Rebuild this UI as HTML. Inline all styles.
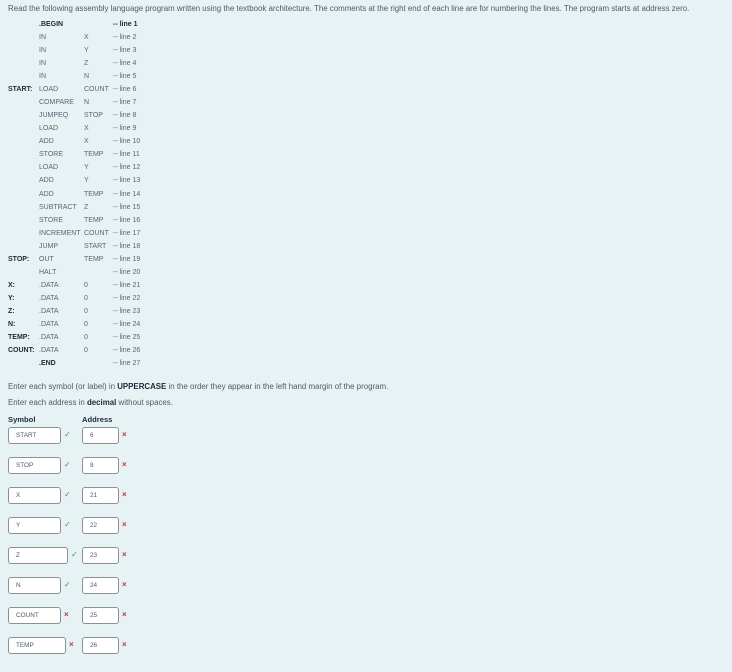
<!DOCTYPE html>
<html><head><style>
body{margin:0;width:732px;height:672px;background:#e6f2f4;font-family:"Liberation Sans",sans-serif;font-size:7px;color:#5a6672;position:relative;overflow:hidden}
.a{position:absolute;white-space:nowrap;line-height:9px}
.t{font-size:7.9px;color:#4f5b66}
.b{font-weight:bold;color:#1d2a36}
.in{position:absolute;height:17px;border:1px solid #8a9096;border-radius:3px;background:#fff;box-sizing:border-box;font-size:6.4px;padding-left:7px;display:flex;align-items:center;color:#556}
.ck{position:absolute;color:#3a9a5a;font-size:8px}
.x{position:absolute;color:#d03030;font-size:8px;font-weight:bold}
</style></head><body>
<div class="a t" style="left:8px;top:4px">Read the following assembly language program written using the textbook architecture. The comments at the right end of each line are for numbering the lines. The program starts at address zero.</div>
<div id="p"></div>
<div class="a t" style="left:8px;top:382px">Enter each symbol (or label) in <b style="color:#1d2a36">UPPERCASE</b> in the order they appear in the left hand margin of the program.</div>
<div class="a t" style="left:8px;top:398px">Enter each address in <b style="color:#1d2a36">decimal</b> without spaces.</div>
<div class="a b" style="left:8px;top:415px;font-size:7.6px">Symbol</div>
<div class="a b" style="left:82px;top:415px;font-size:7.6px">Address</div>
<div id="f"></div>
<script>
var L=[["",".BEGIN","",1],["","IN","X"],["","IN","Y"],["","IN","Z"],["","IN","N"],["START:","LOAD","COUNT"],["","COMPARE","N"],["","JUMPEQ","STOP"],["","LOAD","X"],["","ADD","X"],["","STORE","TEMP"],["","LOAD","Y"],["","ADD","Y"],["","ADD","TEMP"],["","SUBTRACT","Z"],["","STORE","TEMP"],["","INCREMENT","COUNT"],["","JUMP","START"],["STOP:","OUT","TEMP"],["","HALT",""],["X:",".DATA","0"],["Y:",".DATA","0"],["Z:",".DATA","0"],["N:",".DATA","0"],["TEMP:",".DATA","0"],["COUNT:",".DATA","0"],["",".END","",1]];
var h="";L.forEach(function(r,i){var y=20+i*13.04;
if(r[0])h+='<div class="a b" style="left:8px;top:'+y+'px">'+r[0]+'</div>';
h+='<div class="a'+(r[3]?' b':'')+'" style="left:39px;top:'+y+'px">'+r[1]+'</div>';
if(r[2])h+='<div class="a" style="left:84px;top:'+y+'px">'+r[2]+'</div>';
h+='<div class="a'+(i==0?' b':'')+'" style="left:113px;top:'+y+'px">-- line '+(i+1)+'</div>';});
document.getElementById("p").innerHTML=h;
var F=[["START",6,61,1],["STOP",8,61,1],["X",21,61,1],["Y",22,61,1],["Z",23,68,1],["N",24,61,1],["COUNT",25,61,0],["TEMP",26,66,0]];
h="";F.forEach(function(r,i){var y=427+i*30;
h+='<div class="in" style="left:8px;top:'+y+'px;width:'+(r[2]-8)+'px">'+r[0]+'</div>';
h+='<div class="'+(r[3]?'ck':'x')+'" style="left:'+(r[2]+3)+'px;top:'+(y+3)+'px">'+(r[3]?'✓':'×')+'</div>';
h+='<div class="in" style="left:82px;top:'+y+'px;width:37px">'+r[1]+'</div>';
h+='<div class="x" style="left:122px;top:'+(y+3)+'px">×</div>';});
document.getElementById("f").innerHTML=h;
</script>
</body></html>
